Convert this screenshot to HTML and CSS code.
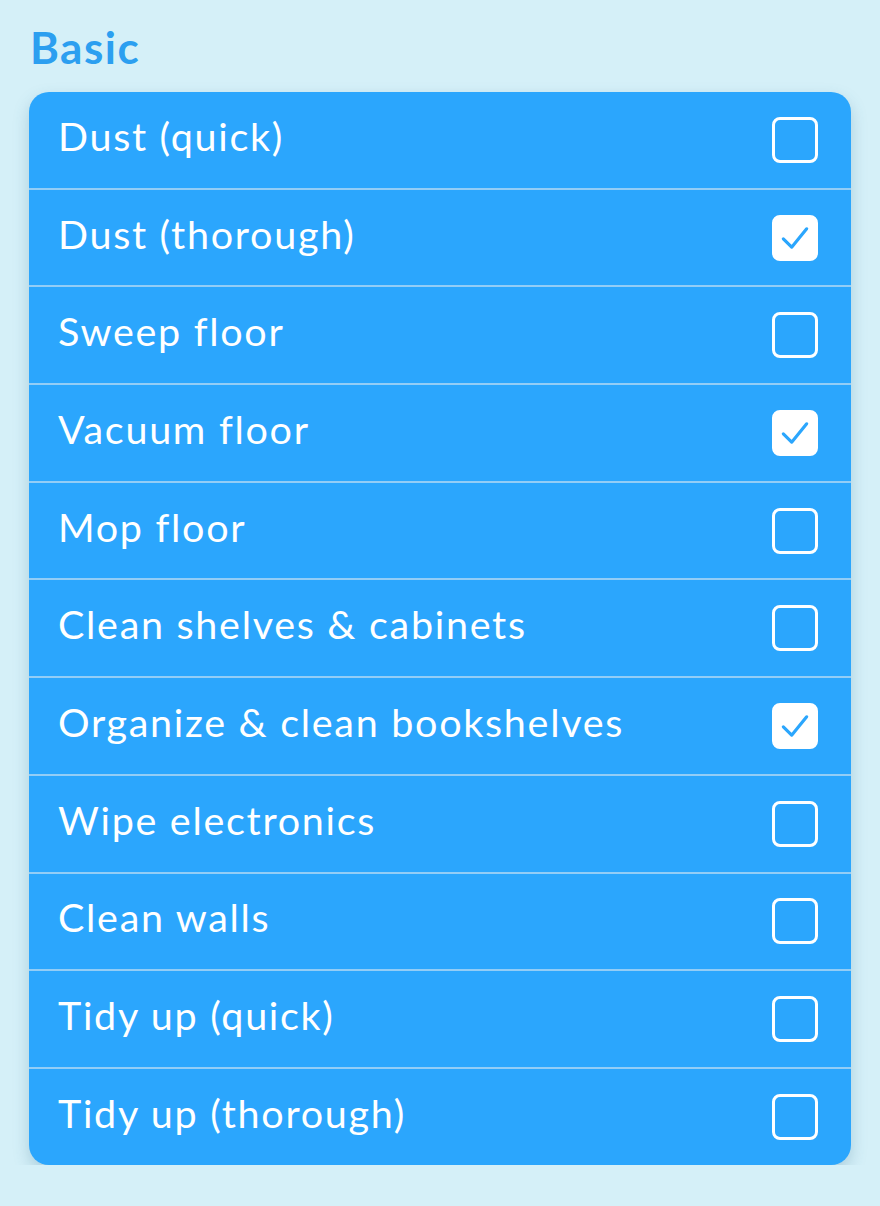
FILE: index.html
```html
<!DOCTYPE html>
<html>
<head>
<meta charset="utf-8">
<link rel="stylesheet" href="styles.css">
</head>
<body>
<div class="page">
  <h1 class="title">Basic</h1>
  <ul class="card">
    <li class="row"><span class="label">Dust (quick)</span><span class="box"></span></li>
    <li class="row"><span class="label">Dust (thorough)</span><span class="box checked"><svg viewBox="0 0 24 24"><path d="M5 12.5 L10 17.5 L19 6.5"/></svg></span></li>
    <li class="row"><span class="label">Sweep floor</span><span class="box"></span></li>
    <li class="row"><span class="label">Vacuum floor</span><span class="box checked"><svg viewBox="0 0 24 24"><path d="M5 12.5 L10 17.5 L19 6.5"/></svg></span></li>
    <li class="row"><span class="label">Mop floor</span><span class="box"></span></li>
    <li class="row"><span class="label">Clean shelves &amp; cabinets</span><span class="box"></span></li>
    <li class="row"><span class="label">Organize &amp; clean bookshelves</span><span class="box checked"><svg viewBox="0 0 24 24"><path d="M5 12.5 L10 17.5 L19 6.5"/></svg></span></li>
    <li class="row"><span class="label">Wipe electronics</span><span class="box"></span></li>
    <li class="row"><span class="label">Clean walls</span><span class="box"></span></li>
    <li class="row"><span class="label">Tidy up (quick)</span><span class="box"></span></li>
    <li class="row"><span class="label">Tidy up (thorough)</span><span class="box"></span></li>
  </ul>
</div>
</body>
</html>
```

FILE: styles.css
```css
html, body {
  margin: 0;
  padding: 0;
  background: #d5f0f8;
}
body {
  font-family: "Lato", "Noto Sans", sans-serif;
}
.page {
  padding: 20px 29px 0 29px;
  width: 822px;
}
.title {
  margin: 0 0 18px 1px;
  font-size: 44px;
  font-weight: 700;
  line-height: 54px;
  color: #2c9ff0;
  letter-spacing: 1.5px;
}
.card {
  list-style: none;
  margin: 0;
  padding: 0;
  background: #2ba6fd;
  border-radius: 20px;
  overflow: hidden;
  box-shadow: 0 7px 16px rgba(60, 120, 150, 0.28);
}
.row {
  display: flex;
  align-items: center;
  justify-content: space-between;
  height: 95.7px;
  padding: 0 33px 0 29px;
  border-bottom: 2px solid #93cdf6;
  box-sizing: content-box;
}
.row:last-child {
  border-bottom: none;
}
.label {
  color: #ffffff;
  font-size: 39.5px;
  font-weight: 400;
  letter-spacing: 1.7px;
  padding-bottom: 9px;
}
.box {
  width: 40px;
  height: 40px;
  border: 3.5px solid #ffffff;
  border-radius: 8px;
  display: flex;
  align-items: center;
  justify-content: center;
}
.box.checked {
  background: #ffffff;
}
.box svg {
  width: 40px;
  height: 40px;
  fill: none;
  stroke: #2ba6fd;
  stroke-width: 1.9;
  stroke-linecap: round;
  stroke-linejoin: round;
}
```
